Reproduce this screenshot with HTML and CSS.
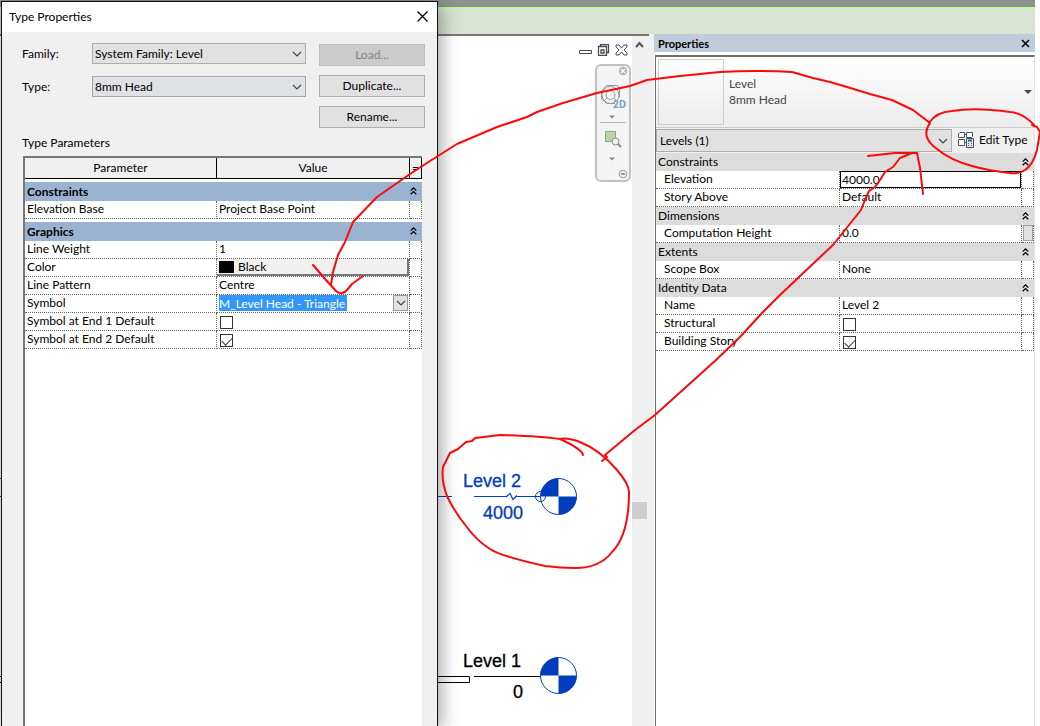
FILE: index.html
```html
<!DOCTYPE html>
<html lang="en">
<head>
<meta charset="utf-8">
<title>Type Properties</title>
<link rel="stylesheet" href="styles.css">
</head>
<body>
<svg class="defs" aria-hidden="true">
  <symbol id="chev" viewBox="0 0 10 6"><path d="M1 1l4 4 4-4" fill="none" stroke="#444" stroke-width="1.2"/></symbol>
  <symbol id="fold" viewBox="0 0 7 8"><path d="M.7 3.6L3.5.9l2.8 2.7M.7 7.3l2.8-2.7 2.8 2.7" fill="none" stroke="#000" stroke-width="1.3"/></symbol>
  <symbol id="bubble" viewBox="0 0 38 38">
    <circle cx="19" cy="19" r="18" fill="#fff" stroke="#003cbe"/>
    <path d="M19 19V1A18 18 0 0 0 1 19zM19 19v18a18 18 0 0 0 18-18z" fill="#003cbe"/>
  </symbol>
</svg>
<div class="app">
  <div class="topstrip"></div>
  <div class="ribbon"></div>
  <div class="workspace">
    <main class="view">
      <svg class="drawing" width="632" height="690" viewBox="0 36 632 690">
        <path d="M0 478.500h2M0 496.500h452M474 496.500h33M516 496.500h24" fill="none" stroke="#003cbe"/>
        <path d="M506 497l4-3.500 3 6 4-4" fill="none" stroke="#003cbe" stroke-width="1.200"/>
        <path d="M0 676.500h469.500v6H0M474 676.500h67" fill="none" stroke="#000"/>
        <use href="#bubble" x="539.500" y="477.500" width="38" height="38"/>
        <circle cx="540.500" cy="496.500" r="5" fill="none" stroke="#003cbe"/>
        <use href="#bubble" x="539.500" y="656.500" width="38" height="38"/>
        <g class="sel"><text x="463" y="487">Level 2</text><text x="483" y="519">4000</text></g>
        <text x="463" y="667">Level 1</text><text x="513" y="698">0</text>
      </svg>
      <div class="view-tools">
        <div class="win-buttons">
          <button aria-label="Minimize"><svg width="13" height="12"><path d="M.5 6.500h12v3H.5z" fill="#fff" stroke="#4b4b55"/></svg></button>
          <button aria-label="Restore"><svg width="13" height="12"><path d="M3.500 2.500v-2h8v8h-2M1.500 2.500h8v9h-8zM4 6h3v3H4z" fill="none" stroke="#4b4b55" stroke-width="1.300"/></svg></button>
          <button aria-label="Close view"><svg width="13" height="12"><path d="M1 1h3l2.500 3L9 1h3v2L9 6l3 3v2H9L6.500 8 4 11H1V9l3-3-3-3z" fill="#fff" stroke="#4b4b55"/></svg></button>
        </div>
        <div class="navbar">
          <svg width="32" height="114" fill="none">
            <circle cx="26" cy="5" r="4.200" fill="#b4b4b4"/><path d="M24 3l4 4M28 3l-4 4" stroke="#fff" stroke-width="1.300"/>
            <path d="M18 37.500H10L4.500 33V25l5-5.500h11l2 3v9" stroke="#8d98a3"/><circle cx="13.500" cy="29" r="8.500" stroke="#999"/><circle cx="13.500" cy="29" r="4.500" stroke="#999"/><path d="M7 35l3-3M17 32l2 2" stroke="#999"/>
            <text x="16" y="42">2D</text>
            <path d="M12 49.500h6l-3 3zM12 91.500h6l-3 3z" fill="#888"/>
            <path d="M3 56.500h26" stroke="#bbb"/>
            <path d="M8.500 65.500h10v10h-10z" fill="#bed4ad" stroke="#86ae78"/>
            <circle cx="18.500" cy="75.500" r="3.500" fill="#f4f4f4" stroke="#888"/><path d="M21 78l3 3" stroke="#888" stroke-width="2"/>
            <circle cx="26" cy="108" r="3.700" stroke="#aaa" stroke-width="1.300"/><path d="M24 108h4" stroke="#999" stroke-width="2"/>
          </svg>
        </div>
      </div>
    </main>
    <div class="scrollbar"><svg width="17" height="18"><path d="M4 11l3.500-4L11 11" fill="none" stroke="#505050" stroke-width="2"/></svg><div class="thumb"></div></div>
    <aside class="panel">
      <header class="panel-title"><h2>Properties</h2><button aria-label="Close properties"><svg width="9" height="9"><path d="M1 1l7 7M8 1L1 8" stroke="#000" stroke-width="1.600"/></svg></button></header>
      <div class="panel-body">
        <button class="type-picker"><span class="thumbnail"></span><span class="type-name">Level<br>8mm Head</span><svg width="8" height="5"><path d="M0 0h8L4 4z" fill="#444"/></svg></button>
        <div class="filter-row">
          <div class="combo filter"><select aria-label="Filter"><option>Levels (1)</option></select><svg width="10" height="6"><use href="#chev"/></svg></div>
          <button class="edit-type"><svg width="17" height="17" fill="#fff" stroke="#4a5560"><path d="M3 1.500h4.500v5h-6V3zM9.500 1.500h6v4l-1 1h-5zM1.500 8.500h6v6h-6zM7 3.500h3M7 11.500h3"/><path d="M9.500 7.500h7v9h-7z" fill="#dce6f0"/><path d="M11 9.500h4" stroke="#1d62a8" stroke-width="2"/><path d="M11 12.500h1M14 12.500h1M11 14.500h1M14 14.500h1"/></svg>Edit Type</button>
        </div>
        <table class="props">
          <colgroup><col class="c1"><col class="c2"><col class="c3"></colgroup>
          <tr class="cat"><th colspan="2">Constraints</th><th><svg width="7" height="8"><use href="#fold"/></svg></th></tr>
          <tr><td><label for="elev">Elevation</label></td><td class="flush"><input id="elev" class="elev" value="4000.0"></td><td></td></tr>
          <tr><td>Story Above</td><td>Default</td><td></td></tr>
          <tr class="cat"><th colspan="2">Dimensions</th><th><svg width="7" height="8"><use href="#fold"/></svg></th></tr>
          <tr><td>Computation Height</td><td>0.0</td><td class="flush"><button class="assoc" aria-label="Associate parameter"></button></td></tr>
          <tr class="cat"><th colspan="2">Extents</th><th><svg width="7" height="8"><use href="#fold"/></svg></th></tr>
          <tr><td>Scope Box</td><td>None</td><td></td></tr>
          <tr class="cat"><th colspan="2">Identity Data</th><th><svg width="7" height="8"><use href="#fold"/></svg></th></tr>
          <tr><td>Name</td><td>Level 2</td><td></td></tr>
          <tr><td><label for="struct">Structural</label></td><td><input type="checkbox" id="struct"></td><td></td></tr>
          <tr><td><label for="story">Building Story</label></td><td><input type="checkbox" id="story" checked></td><td></td></tr>
        </table>
      </div>
    </aside>
  </div>
</div>

<section class="dialog" role="dialog" aria-labelledby="dlg-title">
  <header class="dialog-title"><h1 id="dlg-title">Type Properties</h1><button aria-label="Close"><svg width="11" height="11"><path d="M.5.5l10 10M10.500.5l-10 10" stroke="#000" stroke-width="1.200"/></svg></button></header>
  <div class="dialog-body">
    <div class="form">
      <div class="fields">
        <label for="family">Family:</label>
        <div class="combo"><select id="family"><option>System Family: Level</option></select><svg width="10" height="6"><use href="#chev"/></svg></div>
        <label for="type">Type:</label>
        <div class="combo type"><select id="type"><option>8mm Head</option></select><svg width="10" height="6"><use href="#chev"/></svg></div>
      </div>
      <div class="actions"><button disabled>Load...</button><button>Duplicate...</button><button>Rename...</button></div>
    </div>
    <h2>Type Parameters</h2>
    <div class="grid-box">
      <table class="params">
        <colgroup><col class="c1"><col class="c2"><col class="c3"></colgroup>
        <thead><tr><th>Parameter</th><th>Value</th><th>=</th></tr></thead>
        <tbody>
          <tr class="cat"><th colspan="2">Constraints</th><th><svg width="7" height="8"><use href="#fold"/></svg></th></tr>
          <tr><td>Elevation Base</td><td>Project Base Point</td><td></td></tr>
          <tr class="cat"><th colspan="2">Graphics</th><th><svg width="7" height="8"><use href="#fold"/></svg></th></tr>
          <tr><td>Line Weight</td><td>1</td><td></td></tr>
          <tr><td>Color</td><td class="flush"><button class="color"><span class="swatch"></span>Black</button></td><td></td></tr>
          <tr><td>Line Pattern</td><td>Centre</td><td></td></tr>
          <tr><td><label for="symbol">Symbol</label></td><td class="flush"><div class="symbol"><input id="symbol" value="M_Level Head - Triangle"><button aria-label="Choose symbol"><svg width="10" height="6"><use href="#chev"/></svg></button></div></td><td></td></tr>
          <tr><td><label for="end1">Symbol at End 1 Default</label></td><td><input type="checkbox" id="end1"></td><td></td></tr>
          <tr><td><label for="end2">Symbol at End 2 Default</label></td><td><input type="checkbox" id="end2" checked></td><td></td></tr>
        </tbody>
      </table>
    </div>
  </div>
</section>

<svg class="markup" width="1040" height="726" viewBox="0 0 1040 726" aria-hidden="true">
  <path d="M583 455Q582 449 560 439Q540 436 500 435L475 438L472 441L466 442L458 449L450 453L443 467Q441 480 447 496Q454 511 466 526Q477 541 490 549Q500 556 545 566Q560 568 575 568Q600 568 612 552Q629 535 629 492Q629 484 617 470Q600 450 580 442Q568 437 559 439"/>
  <path d="M602 461L607 457L605 455L635 430L655 415L716 360L740 337L762 313L780 295L817 260L833 245L845 230L861 210L865 200L869 191L875 187L880 180L885 172L893 167L900 158L912 153M868 156L895 153H917L920 168L923 194"/>
  <path d="M929 123Q936 112 952 111Q975 107 1010 112Q1023 113 1034 125L1032 125L1037 127L1040 132L1037 150Q1033 165 1025 170Q1020 174 1010 173Q990 171 972 166Q950 160 937 149Q920 137 930 123L913 110L892 100L870 94L847 87L830 82L813 78L792 72Q757 70 720 72L680 76L647 80L630 86L597 93L563 103L537 112L527 117L497 127L457 144L430 161L410 174L377 197L353 222L345 242L338 255L333 272L331 285"/>
  <path d="M313 265L326 280L336 291Q342 296 347 290L352 284L363 276"/>
</svg>
</body>
</html>
```
FILE: styles.css
```css
* { box-sizing: border-box; }
body { margin: 0; font: 12px/16px Lato, "Open Sans", sans-serif; color: #000; background: #fff; overflow: hidden; }
button, input, select { font: inherit; color: inherit; margin: 0; padding: 0; border: 0; border-radius: 0; background: none; }
h1, h2 { margin: 0; font-size: 12px; font-weight: 400; }
.defs { display: none; }
svg { display: block; flex: none; }

.app { display: flex; flex-direction: column; height: 100vh; padding-right: 5px; }
.topstrip { height: 7px; background: #919191; border-bottom: 1px solid #52c41a; }
.ribbon { height: 27px; background: #d8e3d1; }
.workspace { flex: 1; display: flex; min-height: 0; background: #f0f0f0; }
.view { flex: 1; position: relative; min-width: 0; background: #fff; border-top: 2px solid #777; overflow: hidden; }
.drawing { position: absolute; left: 0; top: 0; font: 18px "Liberation Sans", Arial, sans-serif; }
.drawing text { stroke: #000; stroke-width: .3px; }
.drawing .sel text { fill: #003cbe; stroke: #003cbe; }
.view-tools { position: relative; display: flex; flex-direction: column; align-items: flex-end; gap: 8px; padding: 8px 1px 0 0; }
.win-buttons { display: flex; gap: 5px; padding-right: 3px; }
.navbar { border: 2px solid #c0c0c0; border-radius: 6px; background: #f4f4f4; }
.navbar text { font: 700 10px "Open Sans", sans-serif; fill: #7f9fbe; }
.scrollbar { width: 17px; border-top: 2px solid #777; background: #f0f0f0; }
.thumb { width: 15px; height: 17px; margin-top: 448px; background: #cdcdcd; }

.panel { width: 381px; margin-left: 5px; display: flex; flex-direction: column; background: #fff; }
.panel-title { display: flex; align-items: center; justify-content: space-between; height: 18px; padding: 1px 5px 0 4px; background: #bfccdb; }
.panel-title h2 { font-size: 11px; font-weight: 700; }
.panel-body { flex: 1; margin: 3px 0 0 1px; border: 1px solid #707070; border-top-width: 2px; border-right-color: #e3e3e3; border-bottom: 0; }
.type-picker { display: flex; align-items: center; gap: 5px; width: 100%; height: 71px; padding: 3px 2px 3px; background: linear-gradient(#fff, #ececec); border-bottom: 1px solid #ccc; text-align: left; }
.thumbnail { width: 66px; height: 66px; border: 1px solid #ccc; flex: none; }
.type-name { flex: 1; color: #444; }
.filter-row { display: flex; height: 25px; padding: 1px 0; background: #f0f0f0; }
.edit-type { display: flex; align-items: center; gap: 5px; width: 82px; padding: 0 0 2px 5px; }

.combo { display: grid; align-items: center; }
.combo > * { grid-area: 1 / 1; }
.combo select { appearance: none; width: 100%; height: 21px; padding-left: 2px; border: 1px solid #adadad; background: #e1e1e1; }
.combo.type select { border-color: #a1a9b5; background: #dfe1e4; }
.combo svg { justify-self: end; margin-right: 4px; pointer-events: none; }
.combo.filter { flex: 1; }
.combo.filter select { height: 23px; padding-left: 3px; }

table { width: 100%; table-layout: fixed; border-collapse: separate; border-spacing: 0; }
td, th { height: 18px; padding: 0 0 0 2px; text-align: left; font-weight: 400; line-height: 16px; white-space: nowrap; vertical-align: middle; }
td { line-height: 15px; vertical-align: top; border-right: 1px dotted #666; border-bottom: 1px dotted #666; }
td.flush { padding: 0; }
.cat th { padding-bottom: 1px; line-height: 15px; }
.cat th:last-child { padding-left: 0; }
.props .c1 { width: 184px; }
.props .c3 { width: 12px; }
.props td:first-child { padding-left: 8px; }
.props .cat th { background: #dcdcdc; }
.elev { display: block; width: 100%; height: 17px; padding: 0 0 1px 1px; border: 1px solid #000; outline: 0; }
.assoc { display: block; width: 10px; height: 16px; margin-left: 1px; border: 1px solid #a0a0a0; background: #e1e1e1; }
input[type=checkbox] { appearance: none; display: grid; width: 13px; height: 13px; margin: 3px 0 0 1px; border: 1px solid #333; background: #fff; }
input[type=checkbox]:checked::after { content: ""; width: 9px; height: 5px; margin: 2px 0 0 1px; border: solid #333; border-width: 0 0 1px 1px; transform: rotate(-45deg); }

.dialog { position: absolute; left: 1px; top: 1px; bottom: 0; width: 437px; display: flex; flex-direction: column; border: 1px solid #111; border-bottom: 0; background: #f0f0f0; box-shadow: 2px 4px 18px rgba(0, 0, 0, .4); }
.dialog-title { display: flex; align-items: center; justify-content: space-between; height: 30px; padding: 0 9px 1px 7px; background: #fff; }
.dialog-body { flex: 1; display: flex; flex-direction: column; padding: 11px 12px 0 20px; }
.form { display: flex; justify-content: space-between; }
.fields { display: grid; grid-template-columns: 70px 214px; grid-auto-rows: 21px; row-gap: 12px; align-items: center; }
.actions { display: grid; grid-template-columns: 106px; grid-auto-rows: 22px; row-gap: 9px; padding-top: 1px; }
.actions button { border: 1px solid #adadad; background: #e1e1e1; }
.actions button:disabled { border-color: #bfbfbf; background: #ccc; color: #838383; }
.dialog h2 { margin: 7px 0 5px; }
.grid-box { flex: 1; border: solid #777; border-width: 2px 0 0 2px; margin: 0 3px 0 1px; background: #fff; }
.params .c1 { width: 192px; }
.params .c3 { width: 12px; }
.params thead th { height: 21px; padding: 0; text-align: center; background: #f0f0f0; border-right: 1px solid #000; border-bottom: 1px solid #000; }
.params .cat th { height: 22px; border-top: 3px solid #fff; background: #9ab3d1; font-weight: 700; }
.color { display: flex; align-items: center; gap: 4px; width: 100%; height: 17px; padding-left: 2px; border: solid #777; border-width: 0 2px 2px 0; background: #f0f0f0; }
.swatch { width: 15px; height: 12px; background: #000; }
.symbol { display: flex; justify-content: space-between; height: 17px; padding: 0 1px 0 2px; }
.symbol input { width: 128px; height: 16px; background: #3297fd; color: #fff; outline: 0; }
.symbol button { display: grid; place-items: center; width: 15px; height: 16px; border: 1px solid #999; background: #e1e1e1; }
.markup { position: absolute; left: 0; top: 0; pointer-events: none; fill: none; stroke: #fa0a0a; stroke-width: 2; stroke-linejoin: round; stroke-linecap: round; }
```
